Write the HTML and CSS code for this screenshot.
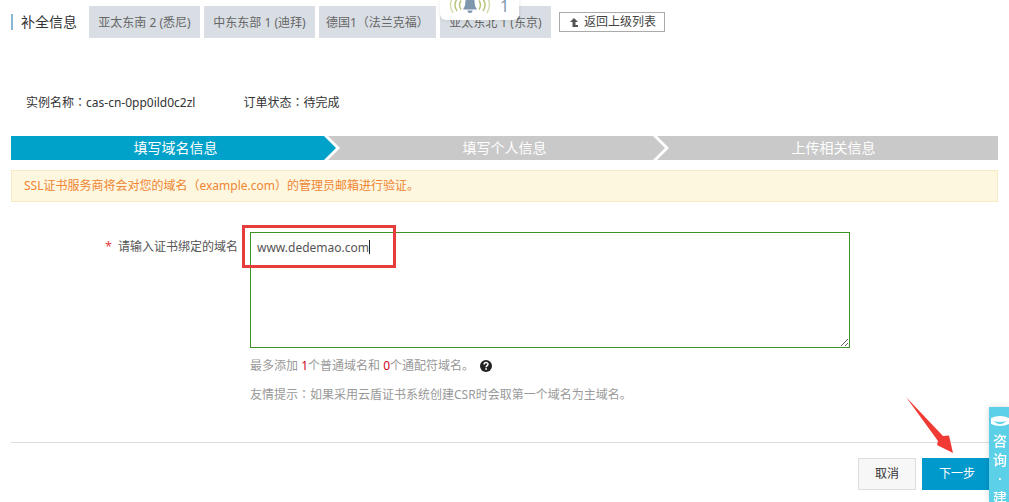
FILE: index.html
```
<!DOCTYPE html>
<html lang="zh-CN">

<head>
    <meta charset="UTF-8">
    <meta name="viewport" content="width=device-width, initial-scale=1.0">
    <title>补全信息</title>
    <link rel="stylesheet" href="styles.css">
</head>

<body>
    <div class="notice">
        <svg class="notice-icon" width="42" height="24" viewBox="0 0 42 24" aria-hidden="true">
            <path d="M21 3c1 0 1.300 1 1.300 2 2.700 1 3.400 3 3.400 6 0 3 1.300 4.500 2.300 6.500H14c1-2 2.300-3.500 2.300-6.500 0-3 .7-5 3.400-6 0-1 .3-2 1.300-2z" fill="#7f97ad" />
            <path d="M18.500 18.500h5a2.500 2.500 0 0 1-5 0z" fill="#7f97ad" />
            <g fill="none" stroke="#b9c47c" stroke-width="1.500">
                <path d="M12 8.500q-3 4.500 0 9M30 8.500q3 4.500 0 9" />
                <path d="M8 7q-4 6 0 12M34 7q4 6 0 12" />
                <path d="M4 5q-5 8 0 16M38 5q5 8 0 16" opacity=".6" />
            </g>
        </svg>
        <span class="notice-count">1</span>
    </div>

    <div class="container">
        <header class="header">
            <h1 class="title">补全信息</h1>
            <nav class="regions">
                <a class="region" href="#">亚太东南 2 (悉尼)</a>
                <a class="region" href="#">中东东部 1 (迪拜)</a>
                <a class="region" href="#">德国1（法兰克福）</a>
                <a class="region" href="#">亚太东北 1 (东京)</a>
            </nav>
            <a class="back" href="#">
                <svg width="8" height="9" viewBox="0 0 8 9" aria-hidden="true">
                    <path d="M4 0l4 4H5.500v3H8v2H2.500V4H0z" fill="#555" />
                </svg>
                返回上级列表
            </a>
        </header>

        <div class="info">
            <span class="info-item">实例名称<span class="colon" lang="ja">：</span>cas-cn-0pp0ild0c2zl</span>
            <span class="info-item">订单状态<span class="colon" lang="ja">：</span>待完成</span>
        </div>

        <ol class="steps">
            <li class="step active">填写域名信息</li>
            <li class="step">填写个人信息</li>
            <li class="step">上传相关信息</li>
        </ol>

        <p class="alert">SSL证书服务商将会对您的域名（example.com）的管理员邮箱进行验证。</p>

        <form class="form">
            <label class="label" for="domain"><span class="required">*</span>请输入证书绑定的域名</label>
            <div class="field">
                <div class="input-wrap">
                    <textarea class="textarea" id="domain">www.dedemao.com</textarea>
                    <div class="mark"><span class="caret"></span></div>
                </div>
                <p class="hint">最多添加 <span class="num">1</span>个普通域名和 <span class="num">0</span>个通配符域名。
                    <svg class="help" width="12" height="12" viewBox="0 0 12 12" aria-hidden="true">
                        <circle cx="6" cy="6" r="6" fill="#222" />
                        <path d="M4.100 4.500C4.100 2 8 2 8 4.300 8 5.600 6.100 5.700 6.100 7.200" fill="none" stroke="#fff" stroke-width="1.500" />
                        <rect x="5.300" y="8.200" width="1.600" height="1.600" fill="#fff" />
                    </svg>
                </p>
                <p class="hint">友情提示<span class="colon" lang="ja">：</span>如果采用云盾证书系统创建CSR时会取第一个域名为主域名。</p>
            </div>
        </form>

        <footer class="footer">
            <button class="btn" type="button">取消</button>
            <button class="btn btn-primary" type="button">下一步</button>
            <svg class="pointer" width="50" height="58" viewBox="0 0 50 58" aria-hidden="true">
                <path d="M1 1L38 40 44 39.500 48 57 32 49 33 45z" fill="#f23a34" />
            </svg>
        </footer>
    </div>

    <a class="consult" href="#">
        <svg width="18" height="12" viewBox="0 0 18 12" aria-hidden="true">
            <path d="M0 3Q9-1 18 3V9Q9 13 0 9z" fill="#fff" />
            <path d="M3 6Q9 8 15 6 13 9 9 9T3 6z" fill="#5bd0e6" />
        </svg>
        <span>咨</span>
        <span>询</span>
        <span>·</span>
        <span>建</span>
    </a>
</body>

</html>
```
FILE: styles.css
```
* {
    margin: 0;
    padding: 0;
    box-sizing: border-box;
}

body {
    font-family: "Noto Sans", "Noto Sans CJK SC", sans-serif;
    font-size: 12px;
    line-height: 20px;
    color: #333;
    background: #fff;
}

a {
    color: inherit;
    text-decoration: none;
}

.container {
    padding: 6px 11px 12px;
}

.header {
    display: flex;
    align-items: center;
}

.title {
    padding-left: 8px;
    border-left: 2px solid #88b7d5;
    font-size: 14px;
    font-weight: 400;
    line-height: 16px;
    margin-right: 12px;
    white-space: nowrap;
}

.regions {
    display: flex;
    gap: 4px;
}

.region {
    min-width: 111px;
    padding: 2px 7px 0;
    line-height: 30px;
    text-align: center;
    color: #666;
    background: #d9dee4;
    white-space: nowrap;
}

.back {
    display: flex;
    align-items: center;
    gap: 6px;
    margin-left: 8px;
    padding: 0 8px 0 10px;
    border: 1px solid #aaa;
    line-height: 18px;
    color: #444;
    white-space: nowrap;
}

.notice {
    position: absolute;
    top: 0;
    left: 440px;
    display: flex;
    align-items: flex-start;
    gap: 9px;
    width: 79px;
    height: 20px;
    padding: 0 9px;
    background: #fff;
    border-radius: 0 0 6px 6px;
    box-shadow: 0 0 4px rgba(0, 0, 0, 0.1);
}

.notice-icon {
    flex: none;
    margin-top: -8px;
}

.notice-count {
    font-size: 16px;
    line-height: 12px;
    color: #7f97ad;
}

.info {
    display: flex;
    gap: 48px;
    margin-top: 54px;
    padding-left: 15px;
}

.colon {
    font-family: "Noto Sans CJK JP", sans-serif;
}

.steps {
    display: flex;
    margin-top: 23px;
    list-style: none;
    background: #c9c9c9;
}

.step {
    position: relative;
    flex: 1;
    height: 24px;
    font-size: 14px;
    line-height: 24px;
    text-align: center;
    color: #fff;
}

/* white chevron with the step's own colour on top of it */
.step:not(:last-child)::before,
.step:not(:last-child)::after {
    content: '';
    position: absolute;
    top: 0;
    right: 0;
    width: 16px;
    height: 24px;
    background: #fff;
    clip-path: polygon(0 0, 4px 0, 100% 50%, 4px 100%, 0 100%);
}

.step:not(:last-child)::after {
    right: 4px;
    background: #c9c9c9;
}

.step.active {
    background: linear-gradient(to right, #00a2ca calc(100% - 16px), #c9c9c9 0);
}

.step.active::after {
    background: #00a2ca;
}

.alert {
    margin-top: 10px;
    padding: 5px 12px;
    border: 1px solid #f8eac6;
    background: #fdf7e0;
    color: #ef8532;
}

.form {
    display: flex;
    margin-top: 30px;
}

.label {
    flex: none;
    width: 227px;
    padding-top: 5px;
    text-align: right;
    color: #555;
}

.required {
    margin-right: 6px;
    color: #e4393c;
}

.field {
    flex: 1;
    margin-left: 12px;
}

.input-wrap {
    position: relative;
    max-width: 600px;
}

.textarea {
    display: block;
    width: 100%;
    height: 116px;
    padding: 5px 6px;
    border: 1px solid #3c9323;
    outline: none;
    background: #fff;
    font: inherit;
    color: #555;
}

.mark {
    position: absolute;
    top: -7px;
    left: -8px;
    width: 154px;
    height: 43px;
    border: 3px solid #e63c3c;
    pointer-events: none;
}

.caret {
    position: absolute;
    top: 12px;
    right: 23px;
    width: 1px;
    height: 14px;
    background: #222;
}

.hint {
    margin-top: 8px;
    color: #999;
}

.num {
    color: #d0021b;
}

.help {
    margin-left: 3px;
    vertical-align: -2px;
}

.footer {
    position: relative;
    display: flex;
    justify-content: flex-end;
    gap: 6px;
    margin-top: 37px;
    padding: 15px 6px 0;
    border-top: 1px solid #ddd;
}

.btn {
    height: 32px;
    padding: 0 16px;
    border: 1px solid #ddd;
    background: #f7f7f7;
    font: inherit;
    color: #333;
    cursor: pointer;
}

.btn-primary {
    border-color: #0099cc;
    background: #0099cc;
    color: #fff;
}

.pointer {
    position: absolute;
    top: -47px;
    right: 43px;
}

.consult {
    position: fixed;
    right: 0;
    bottom: 0;
    display: flex;
    flex-direction: column;
    align-items: center;
    width: 20px;
    height: 95px;
    padding: 8px 0 0 2px;
    overflow: hidden;
    background: #5bd0e6;
    box-shadow: 0 0 6px rgba(0, 0, 0, 0.15);
    font-size: 14px;
    font-weight: 500;
    line-height: 19px;
    color: #fff;
}

.consult svg {
    flex: none;
    margin-bottom: 4px;
}
```
